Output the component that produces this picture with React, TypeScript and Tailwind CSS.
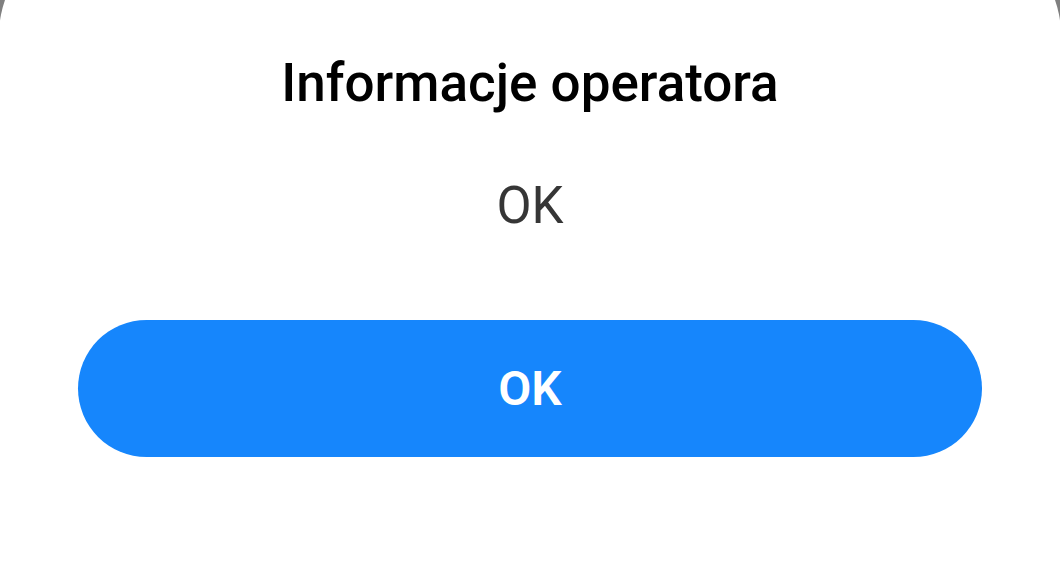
import React from 'react';

const App: React.FC = () => {
    return (
        <div className="w-[1060px] h-[566px] overflow-hidden bg-[#808080]" style={{ fontFamily: 'Roboto, "Noto Sans", sans-serif' }}>
            <div className="-mt-[70px] -mx-px h-[640px] bg-white rounded-t-[105px] pt-[127px] flex flex-col items-center">
                {/* Title */}
                <h1 className="text-[53px] leading-none font-medium text-black">
                    Informacje operatora
                </h1>

                {/* Message */}
                <p className="mt-[70px] text-[51px] leading-none text-[#363636]">OK</p>

                {/* Action */}
                <button className="mt-[89px] w-[904px] h-[137px] rounded-full bg-[#1686fc] text-white text-[48px] font-semibold leading-none">
                    OK
                </button>
            </div>
        </div>
    );
};

export default App;
